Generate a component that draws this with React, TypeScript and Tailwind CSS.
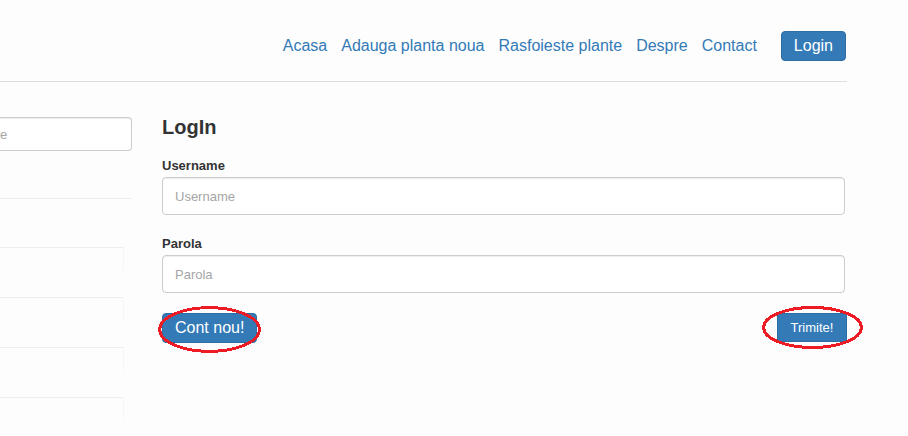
const links = ['Acasa', 'Adauga planta noua', 'Rasfoieste plante', 'Despre', 'Contact'];

const inputStyle =
  'border border-[#ccc] bg-white text-[13px] text-[#555] shadow-[inset_0_1px_1px_rgba(0,0,0,0.075)] outline-none placeholder:text-[#a5a5a5]';
const buttonStyle = 'border border-[#2e6da4] bg-[#337ab7] text-white';

function Header() {
  return (
    <header className="flex items-center justify-end border-b border-[#ddd] pt-[31px] pr-px pb-5">
      <nav className="flex gap-[14px] text-base leading-[28px] text-[#337ab7]">
        {links.map((label) => (
          <a key={label} href="#">
            {label}
          </a>
        ))}
      </nav>
      <button type="button" className={`${buttonStyle} ml-6 h-[30px] rounded px-3 text-base leading-[28px]`}>
        Login
      </button>
    </header>
  );
}

function Sidebar() {
  return (
    <aside className="w-[132px] shrink-0">
      <input
        type="text"
        aria-label="Cauta"
        placeholder="e"
        className={`${inputStyle} block h-[34px] w-full rounded-r border-l-0 pr-3`}
      />
      <hr className="mt-[47px] border-[#eee]" />
      <ul className="mt-12 mr-2 flex flex-col gap-[26px]">
        {[0, 1, 2, 3].map((item) => (
          <li key={item} className="h-6 border-t border-r border-t-[#eee] border-r-[#f7f7f7]" />
        ))}
      </ul>
    </aside>
  );
}

function Field({ id, label, type }: { id: string; label: string; type: string }) {
  return (
    <div className="mr-0.5 mb-5">
      <label htmlFor={id} className="block h-5 text-[13px] leading-[18px] font-bold">
        {label}
      </label>
      <input
        id={id}
        type={type}
        placeholder={label}
        className={`${inputStyle} block h-[38px] w-full rounded px-3`}
      />
    </div>
  );
}

function Marker({ className }: { className: string }) {
  return (
    <svg className={`pointer-events-none absolute ${className}`} fill="none" aria-hidden="true">
      <ellipse
        cx="50%"
        cy="50%"
        rx="48.4%"
        ry="46.5%"
        stroke="#ed1c24"
        strokeWidth="3"
        shapeRendering="crispEdges"
      />
    </svg>
  );
}

function LoginForm() {
  return (
    <form className="min-w-0 flex-1">
      <h1 className="mb-5 h-5 text-xl leading-5 font-bold">LogIn</h1>
      <Field id="username" label="Username" type="text" />
      <Field id="parola" label="Parola" type="password" />
      <div className="flex items-start justify-between">
        <div className="relative">
          <button type="button" className={`${buttonStyle} block h-[30px] rounded px-3 text-base leading-[28px]`}>
            Cont nou!
          </button>
          <Marker className="-top-[7px] -left-1 h-[47px] w-[103px]" />
        </div>
        <div className="relative">
          <button type="submit" className={`${buttonStyle} block h-[29px] w-[70px] text-[13px] leading-[27px]`}>
            Trimite!
          </button>
          <Marker className="-top-[7px] -left-[15px] h-[43px] w-[101px]" />
        </div>
      </div>
    </form>
  );
}

export default function App() {
  return (
    <div className="min-h-screen bg-[#fdfdfd] pr-[61px] font-['Liberation_Sans',Arial,sans-serif] text-[#333]">
      <Header />
      <main className="flex gap-[30px] pt-[35px]">
        <Sidebar />
        <LoginForm />
      </main>
    </div>
  );
}
